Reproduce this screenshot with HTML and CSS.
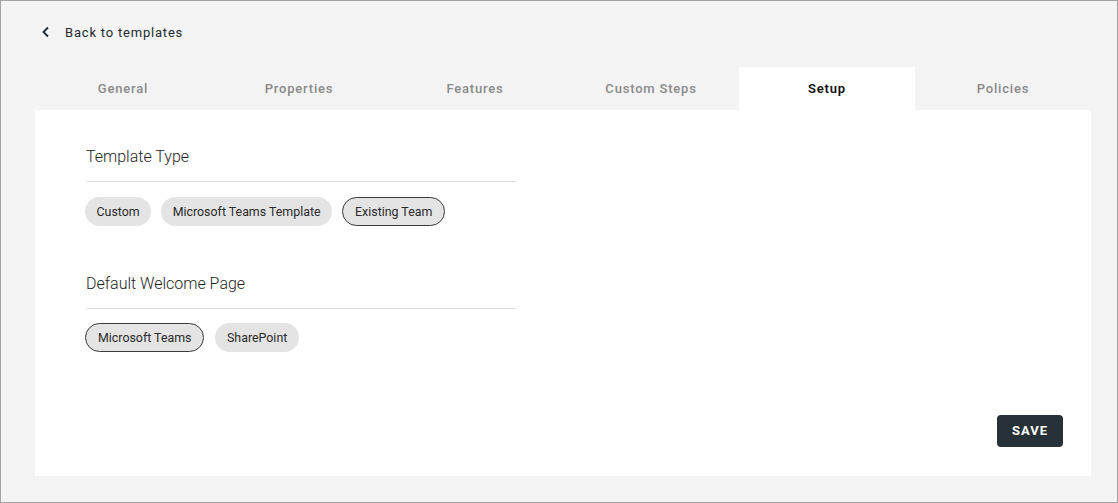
FILE: index.html
```html
<!DOCTYPE html>
<html>
<head>
<meta charset="utf-8">
<link rel="stylesheet" href="styles.css">
</head>
<body>
<div class="frame">
  <a class="back" href="#">
    <svg class="chev" width="10" height="12" viewBox="0 0 10 12"><path d="M7 1.5 L2.5 6 L7 10.5" fill="none" stroke="#1f2a30" stroke-width="1.8"/></svg>
    <span>Back to templates</span>
  </a>
  <nav class="tabs">
    <div class="tab">General</div>
    <div class="tab">Properties</div>
    <div class="tab">Features</div>
    <div class="tab">Custom Steps</div>
    <div class="tab active">Setup</div>
    <div class="tab">Policies</div>
  </nav>
  <main class="panel">
    <section class="group">
      <h2 class="title">Template Type</h2>
      <div class="chips">
        <span class="chip">Custom</span>
        <span class="chip">Microsoft Teams Template</span>
        <span class="chip selected">Existing Team</span>
      </div>
    </section>
    <section class="group second">
      <h2 class="title">Default Welcome Page</h2>
      <div class="chips">
        <span class="chip selected">Microsoft Teams</span>
        <span class="chip">SharePoint</span>
      </div>
    </section>
    <div class="actions">
      <button class="save">SAVE</button>
    </div>
  </main>
</div>
</body>
</html>
```
FILE: styles.css
```css
* { box-sizing: border-box; }
html, body { margin: 0; padding: 0; }
body { font-family: Roboto, "Liberation Sans", sans-serif; }
.frame {
  width: 1118px;
  height: 503px;
  border: 1px solid #a3a3a3;
  background: #f4f4f4;
  padding: 0 26px 26px 34px;
  display: flex;
  flex-direction: column;
}
.back {
  display: flex;
  align-items: center;
  gap: 14px;
  margin-top: 22px;
  margin-left: 6px;
  height: 18px;
  text-decoration: none;
  color: #222a30;
  font-size: 13px;
  letter-spacing: 0.8px;
}
.chev { display: block; }
.tabs {
  display: grid;
  grid-template-columns: repeat(6, 1fr);
  margin-top: 26px;
  height: 43px;
}
.tab {
  display: flex;
  align-items: center;
  justify-content: center;
  font-size: 13px;
  font-weight: 500;
  letter-spacing: 0.8px;
  color: #8a8a8a;
}
.tab.active {
  background: #fff;
  color: #111;
  font-weight: 600;
}
.panel {
  flex: 1;
  background: #fff;
  padding: 37px 28px 29px 51px;
  display: flex;
  flex-direction: column;
}
.group { width: 430px; }
.group.second { margin-top: 48px; }
.title {
  margin: 0;
  font-size: 16px;
  font-weight: 300;
  line-height: 20px;
  color: #1e1e1e;
  padding-bottom: 14px;
  border-bottom: 1px solid #dedede;
}
.chips {
  display: flex;
  gap: 10px;
  margin-top: 15px;
  margin-left: -1px;
}
.second .chips { margin-top: 14px; }
.chip {
  display: inline-block;
  height: 29px;
  line-height: 27px;
  padding: 0 10.5px;
  border: 1px solid transparent;
  border-radius: 15px;
  background: #e4e4e4;
  font-size: 12.4px;
  color: #2a2a2a;
}
.chip.selected {
  border-color: #3a3a3a;
  padding: 0 12px;
}
.chip.selected + .chip { margin-left: 1px; }
.actions {
  margin-top: auto;
  display: flex;
  justify-content: flex-end;
}
.save {
  width: 66px;
  height: 32px;
  border: none;
  border-radius: 4px;
  background: #263238;
  color: #fff;
  font-family: Roboto, "Liberation Sans", sans-serif;
  font-size: 13px;
  font-weight: 700;
  letter-spacing: 1px;
  padding: 0 0 2px;
}
```
